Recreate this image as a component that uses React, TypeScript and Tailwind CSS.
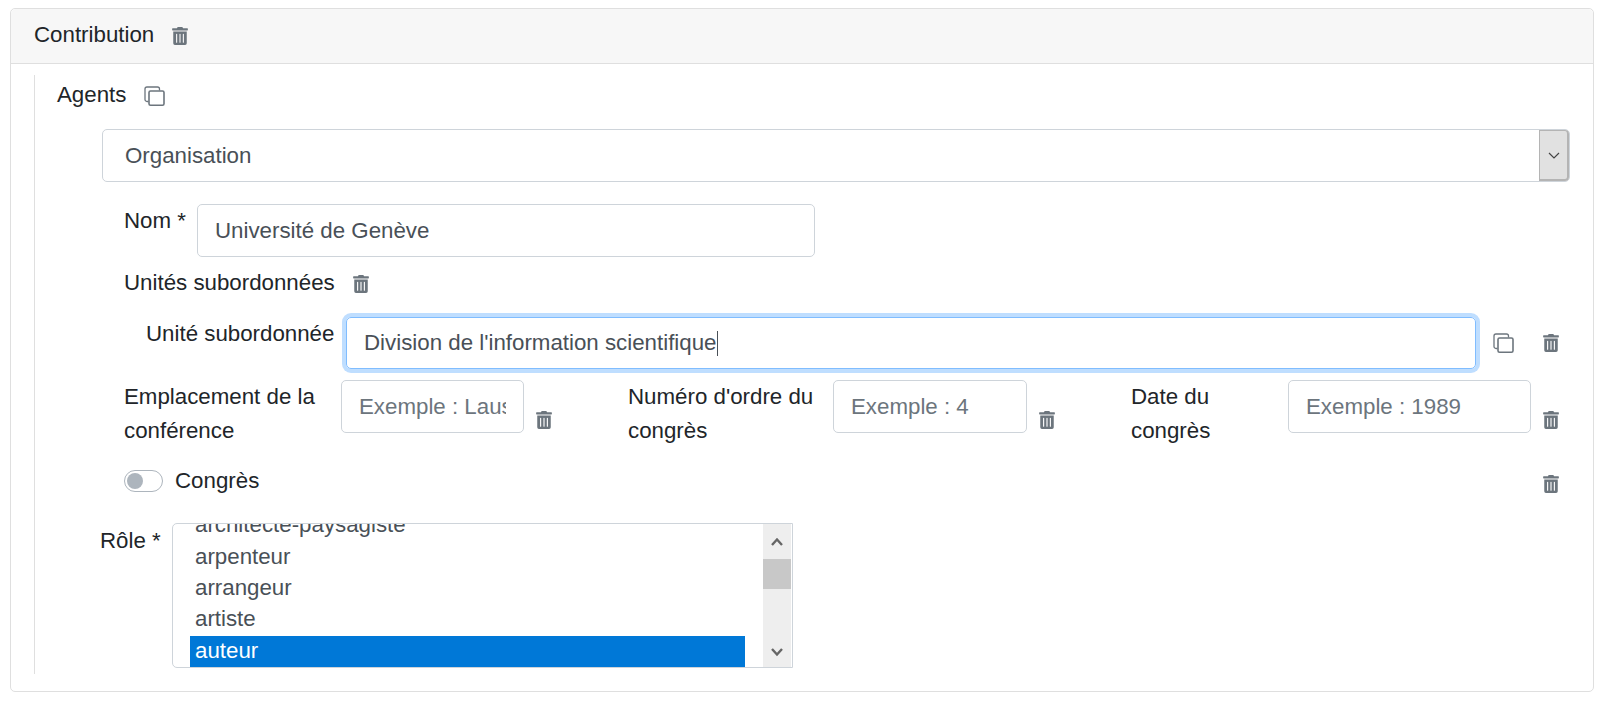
import { FaTrashAlt } from "react-icons/fa";

function Trash({ className = "" }: { className?: string }) {
  return <FaTrashAlt className={`shrink-0 text-[18px] text-[#6c757d] ${className}`} aria-hidden />;
}

/** Two overlapping squares, thin stroke */
function CopyIcon({ className = "" }: { className?: string }) {
  return (
    <svg className={`shrink-0 ${className}`} width="21" height="20" viewBox="0 0 21 20" fill="none" aria-hidden>
      <path d="M4.5 15.5H3A2 2 0 0 1 1 13.5V3A2 2 0 0 1 3 1H13.5A2 2 0 0 1 15.5 3V4.5" stroke="#6c757d" strokeWidth="1.3" />
      <rect x="5" y="5" width="15" height="14.2" rx="1.5" stroke="#6c757d" strokeWidth="1.6" />
    </svg>
  );
}

function Chevron({ up }: { up?: boolean }) {
  return (
    <svg width="12" height="9" viewBox="0 0 12 9" fill="none" aria-hidden>
      <path d={up ? "M1 8L6 2.5L11 8" : "M1 1L6 6.5L11 1"} stroke="#666" strokeWidth="2.4" />
    </svg>
  );
}

const inputClass =
  "h-[53px] shrink-0 rounded-[5px] border border-[#ced4da] bg-white px-[17px] text-[#495057] outline-none placeholder:text-[#6c757d]";

const roles = ["architecte-paysagiste", "arpenteur", "arrangeur", "artiste", "auteur"];

export default function App() {
  return (
    <div className="h-[702px] w-[1605px] overflow-hidden bg-white pl-[10px] pt-[8px] font-['Liberation_Sans',Arial,sans-serif] text-[22.3px] leading-[33.6px] text-[#212529]">
      <div className="h-[684px] w-[1584px] rounded-[5px] border border-[#dfdfdf]">
        <div className="flex h-[55px] items-center gap-[17px] rounded-t-[5px] border-b border-[#dfdfdf] bg-[#f7f7f7] pb-[2px] pl-[23px]">
          <span>Contribution</span>
          <Trash className="mt-[2px]" />
        </div>

        <div className="ml-[23px] mt-[11px] h-[599px] border-l border-[#dfdfdf] pl-[22px]">
          <div className="flex h-[40px] items-center gap-[18px]">
            <span>Agents</span>
            <CopyIcon className="mt-[1px]" />
          </div>

          <div className="ml-[45px] mt-[14px] flex h-[53px] w-[1468px] items-center rounded-[5px] border border-[#ced4da] pl-[22px] text-[#495057]">
            <span className="flex-1">Organisation</span>
            <div className="flex h-[51px] w-[30px] items-center justify-center rounded-r-[4px] border-b-2 border-l border-r-2 border-t border-[#b4b4b4] bg-[#e1e1e1]">
              <svg width="12" height="7" viewBox="0 0 12 7" fill="none" aria-hidden>
                <path d="M1 1L6 6L11 1" stroke="#444" strokeWidth="1.2" />
              </svg>
            </div>
          </div>

          <div className="ml-[67px]">
            <div className="mt-[22px] flex items-start">
              <label className="w-[73px]">Nom *</label>
              <input className={`${inputClass} w-[618px]`} defaultValue="Université de Genève" />
            </div>

            <div className="mt-[10px] flex h-[32px] items-center gap-[17px]">
              <span>Unités subordonnées</span>
              <Trash className="mt-[1px]" />
            </div>

            <div className="mt-[18px] flex items-start pl-[22px]">
              <label className="w-[200px]">Unité subordonnée</label>
              <div
                role="textbox"
                className="flex h-[52px] w-[1130px] shrink-0 items-center rounded-[5px] border border-[#80bdff] px-[17px] text-[#495057] shadow-[0_0_0_4px_rgba(0,123,255,0.25)]"
              >
                Division de l'information scientifique
                <span className="h-[25px] w-px bg-[#495057]" />
              </div>
              <CopyIcon className="ml-[17px] mt-[16px]" />
              <Trash className="ml-[28px] mt-[17px]" />
            </div>

            <div className="mt-[11px] flex items-start">
              <label className="w-[217px]">Emplacement de la conférence</label>
              <input className={`${inputClass} w-[183px]`} placeholder="Exemple : Lausanne" />
              <Trash className="ml-[11px] mt-[31px]" />
              <label className="ml-[75px] w-[205px]">Numéro d'ordre du congrès</label>
              <input className={`${inputClass} w-[194px]`} placeholder="Exemple : 4" />
              <Trash className="ml-[11px] mt-[31px]" />
              <label className="ml-[75px] w-[157px]">Date du congrès</label>
              <input className={`${inputClass} w-[243px]`} placeholder="Exemple : 1989" />
              <Trash className="ml-[11px] mt-[31px]" />
            </div>

            <div className="mt-[4px] flex h-[63px] items-start justify-between pr-[33px]">
              <div className="mt-[13px] flex items-center gap-[12px]">
                <div className="flex h-[22px] w-[39px] items-center rounded-full border border-[#adb5bd] pl-[2px]">
                  <div className="h-[16px] w-[16px] rounded-full bg-[#adb5bd]" />
                </div>
                <label>Congrès</label>
              </div>
              <Trash className="mt-[24px]" />
            </div>
          </div>

          <div className="mt-[9px] flex items-start pl-[43px]">
            <label className="mt-px w-[72px]">Rôle *</label>
            <div className="flex h-[145px] w-[621px] overflow-hidden rounded-l-[5px] border border-[#ced4da] text-[#495057]">
              <div className="flex-1 overflow-hidden pl-[17px] pr-[18px]">
                <ul className="mt-[-14px]">
                  {roles.map((role) => (
                    <li
                      key={role}
                      className={`h-[31.4px] pl-[5px] leading-[30px] ${role === "auteur" ? "bg-[#0078d7] text-white" : ""}`}
                    >
                      {role}
                    </li>
                  ))}
                </ul>
              </div>
              <div className="mr-[1px] flex w-[28px] flex-col items-center bg-[#eeeeee]">
                <div className="flex h-[35px] items-center justify-center">
                  <Chevron up />
                </div>
                <div className="h-[30px] w-full bg-[#c8c8c8]" />
                <div className="flex flex-1 items-end justify-center pb-[10px]">
                  <Chevron />
                </div>
              </div>
            </div>
          </div>
        </div>
      </div>
    </div>
  );
}
